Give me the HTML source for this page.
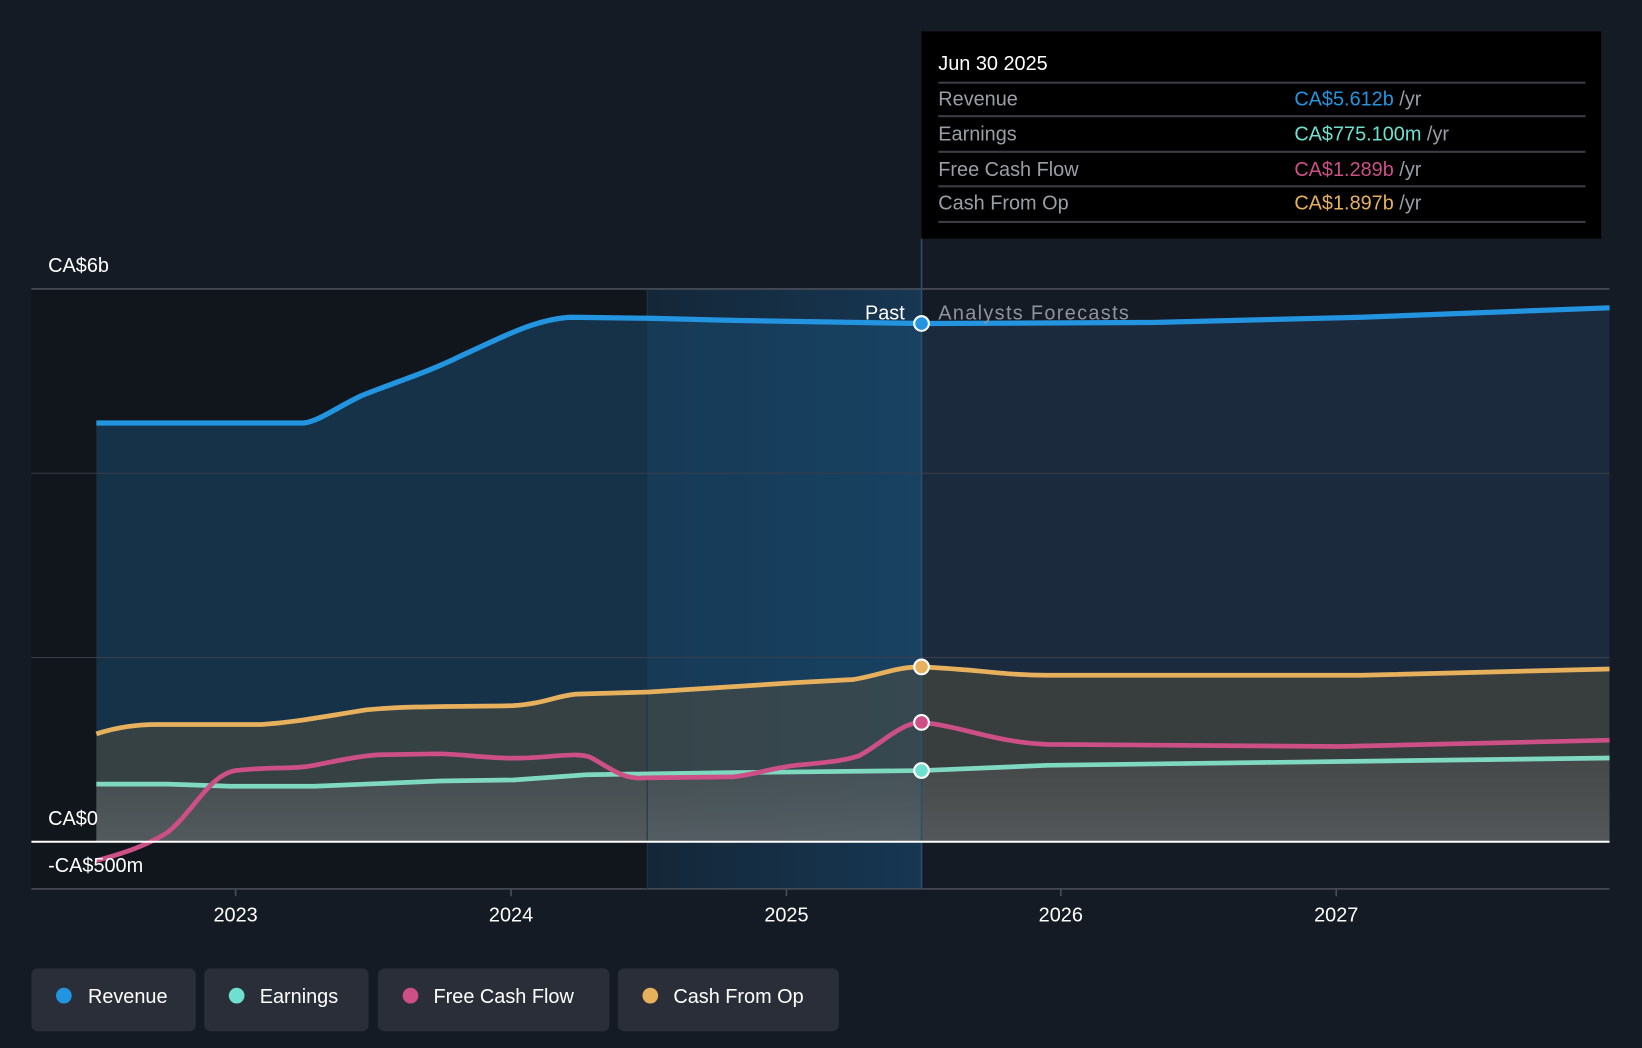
<!DOCTYPE html>
<html><head><meta charset="utf-8"><style>
html,body{margin:0;padding:0;background:#151b24;}
svg{display:block}
text{font-family:"Liberation Sans",sans-serif;}
</style></head><body>
<svg width="1642" height="1048" viewBox="0 0 1568 1001" preserveAspectRatio="none" xmlns="http://www.w3.org/2000/svg">
<defs>
<linearGradient id="hl" x1="0" y1="0" x2="1" y2="0"><stop offset="0" stop-color="#14283a"/><stop offset="1" stop-color="#173a58"/></linearGradient>
<linearGradient id="gr" x1="0" y1="0" x2="0" y2="1"><stop offset="0" stop-color="#6a6a6a" stop-opacity="0.25"/><stop offset="1" stop-color="#8a8a90" stop-opacity="0.35"/></linearGradient>
</defs>
<rect width="1568" height="1001" fill="#151b24"/>
<rect x="30" y="276" width="588" height="573" fill="#11151c"/>
<rect x="618" y="276" width="262" height="573" fill="url(#hl)" opacity="0.9"/>
<path d="M92,404 L290,404 C305,402 320,390 345,378 C380,364 410,355 440,340 C480,322 510,305 545,303 L620,304 L700,306 L880,309 L880,804 L92,804Z" fill="#1a4a70" opacity="0.55"/>
<path d="M880,309 L1100,308 L1300,303 L1537,294 L1537,804 L880,804Z" fill="#1b2a3c"/>
<path d="M92,701 C110,695 130,692 150,692 L250,692 C280,690 300,686 350,678 C390,674 450,675 490,674 C520,672 530,665 550,663 L620,661 L760,652 L815,649 C840,645 855,637 880,637 C940,640 960,645 1000,645 L1300,645 L1537,639 L1537,804 L92,804Z" fill="#55503e" opacity="0.5"/>
<path d="M92,749 L160,749 L220,751 L300,751 L420,746 L490,745 L560,740 L700,738 L880,736 L1000,731 L1537,724 L1537,804 L92,804Z" fill="url(#gr)"/>
<line x1="30" y1="276" x2="1537" y2="276" stroke="#4a4e58" stroke-width="1.5"/>
<line x1="30" y1="452" x2="1537" y2="452" stroke="#3a3f4a" stroke-width="1"/>
<line x1="30" y1="628" x2="1537" y2="628" stroke="#3a3f4a" stroke-width="1"/>
<line x1="30" y1="849" x2="1537" y2="849" stroke="#4a4e58" stroke-width="1.5"/>
<line x1="880" y1="228" x2="880" y2="849" stroke="#2c4f6c" stroke-width="1.5"/>
<line x1="618" y1="276" x2="618" y2="849" stroke="#1f3446" stroke-width="1"/>
<path d="M92,404 L290,404 C305,402 320,390 345,378 C380,364 410,355 440,340 C480,322 510,305 545,303 L620,304 L700,306 L880,309 L1100,308 L1300,303 L1537,294" fill="none" stroke="#2394e0" stroke-width="5"/>
<path d="M92,701 C110,695 130,692 150,692 L250,692 C280,690 300,686 350,678 C390,674 450,675 490,674 C520,672 530,665 550,663 L620,661 L760,652 L815,649 C840,645 855,637 880,637 C940,640 960,645 1000,645 L1300,645 L1537,639" fill="none" stroke="#e6b05c" stroke-width="4.5"/>
<path d="M92,749 L160,749 L220,751 L300,751 L420,746 L490,745 L560,740 L700,738 L880,736 L1000,731 L1537,724" fill="none" stroke="#7fd8c0" stroke-width="4.5"/>
<path d="M92,822 C120,815 145,805 160,795 C185,775 200,740 225,736 C260,732 280,735 300,731 C330,725 345,722 360,721 L420,720 C450,721 470,725 500,724 C530,723 555,718 565,724 C580,732 595,745 615,743 L700,742 C720,740 740,733 760,731 C790,728 805,727 820,722 C840,712 860,690 880,690 C920,694 950,709 1000,711 L1280,713 L1537,707" fill="none" stroke="#cc4f86" stroke-width="4.5"/>
<line x1="30" y1="804" x2="1537" y2="804" stroke="#ffffff" stroke-width="2"/>
<circle cx="880" cy="309" r="7" fill="#2394e0" stroke="#fff" stroke-width="2"/>
<circle cx="880" cy="637" r="7" fill="#e6b05c" stroke="#fff" stroke-width="2"/>
<circle cx="880" cy="690" r="7" fill="#cc4f86" stroke="#fff" stroke-width="2"/>
<circle cx="880" cy="736" r="7" fill="#6fe0cf" stroke="#fff" stroke-width="2"/>
<text x="46" y="260" fill="#fff" font-size="19">CA$6b</text>
<text x="46" y="788" fill="#fff" font-size="19">CA$0</text>
<text x="46" y="833" fill="#fff" font-size="19">-CA$500m</text>
<text x="864" y="305" fill="#fff" font-size="19" text-anchor="end">Past</text>
<text x="896" y="305" fill="#8e939c" font-size="19" textLength="182">Analysts Forecasts</text>
<g fill="#fff" font-size="19" text-anchor="middle">
<text x="225" y="880">2023</text><text x="488" y="880">2024</text><text x="751" y="880">2025</text><text x="1013" y="880">2026</text><text x="1276" y="880">2027</text>
</g>
<g stroke="#4a4e58" stroke-width="1.5"><line x1="225" y1="849" x2="225" y2="856"/><line x1="488" y1="849" x2="488" y2="856"/><line x1="751" y1="849" x2="751" y2="856"/><line x1="1013" y1="849" x2="1013" y2="856"/><line x1="1276" y1="849" x2="1276" y2="856"/></g>
<rect x="880" y="30" width="649" height="198" fill="#000"/>
<text x="896" y="67" fill="#fff" font-size="19">Jun 30 2025</text>
<g stroke="#3a3d44" stroke-width="2"><line x1="896" y1="79" x2="1514" y2="79"/><line x1="896" y1="111" x2="1514" y2="111"/><line x1="896" y1="145" x2="1514" y2="145"/><line x1="896" y1="178" x2="1514" y2="178"/><line x1="896" y1="212" x2="1514" y2="212"/></g>
<g font-size="19" fill="#9a9ea6">
<text x="896" y="101">Revenue</text><text x="896" y="134">Earnings</text><text x="896" y="168">Free Cash Flow</text><text x="896" y="200">Cash From Op</text>
</g>
<g font-size="19">
<text x="1236" y="101"><tspan fill="#2394e0">CA$5.612b</tspan><tspan fill="#9a9ea6"> /yr</tspan></text>
<text x="1236" y="134"><tspan fill="#6fe0cf">CA$775.100m</tspan><tspan fill="#9a9ea6"> /yr</tspan></text>
<text x="1236" y="168"><tspan fill="#cc4f86">CA$1.289b</tspan><tspan fill="#9a9ea6"> /yr</tspan></text>
<text x="1236" y="200"><tspan fill="#e6b05c">CA$1.897b</tspan><tspan fill="#9a9ea6"> /yr</tspan></text>
</g>
<g fill="#2a2e38">
<rect x="30" y="925" width="157" height="60" rx="6"/><rect x="195" y="925" width="157" height="60" rx="6"/><rect x="361" y="925" width="221" height="60" rx="6"/><rect x="590" y="925" width="211" height="60" rx="6"/>
</g>
<circle cx="61" cy="951" r="7.5" fill="#2394e0"/><circle cx="226" cy="951" r="7.5" fill="#6fe0cf"/><circle cx="392" cy="951" r="7.5" fill="#cc4f86"/><circle cx="621" cy="951" r="7.5" fill="#e6b05c"/>
<g fill="#fff" font-size="19">
<text x="84" y="958">Revenue</text><text x="248" y="958">Earnings</text><text x="414" y="958">Free Cash Flow</text><text x="643" y="958">Cash From Op</text>
</g>
</svg>
</body></html>
